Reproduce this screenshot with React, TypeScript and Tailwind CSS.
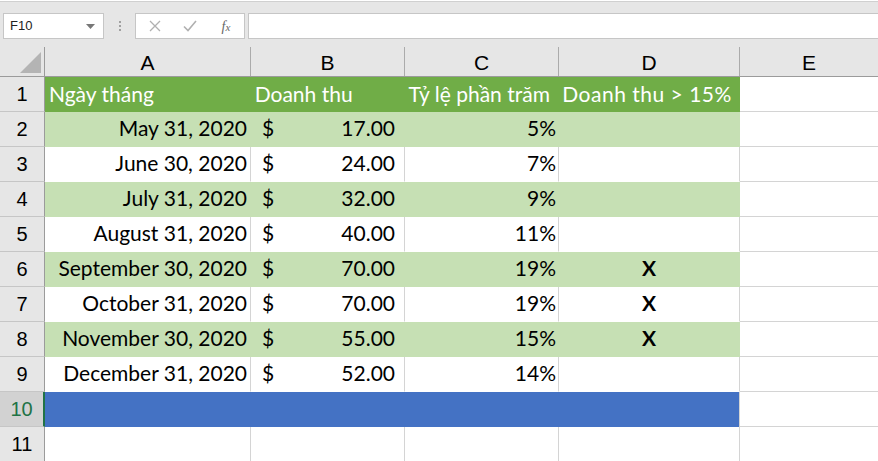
type Fill = "green" | "white";

const data: { n: number; date: string; amt: string; pct: string; x: boolean; fill: Fill }[] = [
  { n: 2, date: "May 31, 2020", amt: "17.00", pct: "5%", x: false, fill: "green" },
  { n: 3, date: "June 30, 2020", amt: "24.00", pct: "7%", x: false, fill: "white" },
  { n: 4, date: "July 31, 2020", amt: "32.00", pct: "9%", x: false, fill: "green" },
  { n: 5, date: "August 31, 2020", amt: "40.00", pct: "11%", x: false, fill: "white" },
  { n: 6, date: "September 30, 2020", amt: "70.00", pct: "19%", x: true, fill: "green" },
  { n: 7, date: "October 31, 2020", amt: "70.00", pct: "19%", x: true, fill: "white" },
  { n: 8, date: "November 30, 2020", amt: "55.00", pct: "15%", x: true, fill: "green" },
  { n: 9, date: "December 31, 2020", amt: "52.00", pct: "14%", x: false, fill: "white" },
];

const cols = [
  { l: "A", w: "w-[206px]" },
  { l: "B", w: "w-[154px]" },
  { l: "C", w: "w-[154px]" },
  { l: "D", w: "w-[181px]" },
];

function RowHead({ n, active }: { n: number; active?: boolean }) {
  return (
    <div
      className={`w-[45px] shrink-0 h-full flex items-center justify-center border-b border-b-[#c6c6c6] text-[20px] font-['Liberation_Sans',sans-serif] ${
        active
          ? "bg-[#d2d2d2] text-[#217346] border-r-2 border-r-[#217346]"
          : "bg-[#e6e6e6] text-black border-r border-r-[#9b9b9b]"
      }`}
    >
      {n}
    </div>
  );
}

function Cell({
  w,
  fill,
  className = "",
  children,
}: {
  w: string;
  fill: Fill;
  className?: string;
  children?: React.ReactNode;
}) {
  const f =
    fill === "green"
      ? "bg-[#c6e0b4] border-r-[#c6e0b4] border-b-[#c6e0b4]"
      : "bg-white border-r-[#d4d4d4] border-b-white";
  return (
    <div className={`${w} shrink-0 h-full flex items-end pb-[3px] border-r border-b ${f} ${className}`}>
      {children}
    </div>
  );
}

function ECell() {
  return <div className="flex-1 h-full bg-white border-b border-b-[#d4d4d4]" />;
}

export default function App() {
  return (
    <div className="w-[878px] h-[461px] overflow-hidden bg-white font-['Lato',sans-serif] text-black">
      {/* formula bar */}
      <div className="h-[46px] bg-[#e6e6e6] border-t border-t-[#d0d0d0] mt-px flex items-start pt-[11px] pl-[3px]">
        <div className="w-[101px] h-[26px] bg-white border border-[#c6c6c6] flex items-center justify-between pl-[6px] pr-[8px] text-[13px] font-['Liberation_Sans',sans-serif] text-[#222]">
          <span>F10</span>
          <svg width="9" height="5" viewBox="0 0 9 5">
            <path d="M0 0h9L4.5 5z" fill="#777" />
          </svg>
        </div>
        <div className="w-[31px] h-[26px] flex flex-col items-center justify-center gap-[2px]">
          <span className="w-[2px] h-[2px] bg-[#a0a0a0]" />
          <span className="w-[2px] h-[2px] bg-[#a0a0a0]" />
          <span className="w-[2px] h-[2px] bg-[#a0a0a0]" />
        </div>
        <div className="w-[110px] h-[26px] bg-white border border-[#c6c6c6] flex items-center text-[#b4b4b4]">
          <div className="w-[36px] flex justify-center pl-[2px]">
            <svg width="12" height="12" viewBox="0 0 12 12">
              <path d="M1 1l10 10M11 1L1 11" stroke="#b0b0b0" strokeWidth="1.3" />
            </svg>
          </div>
          <div className="w-[36px] flex justify-center">
            <svg width="14" height="12" viewBox="0 0 14 12">
              <path d="M1 6.5l4 4L13 1" stroke="#b0b0b0" strokeWidth="1.6" fill="none" />
            </svg>
          </div>
          <div className="flex-1 flex justify-center font-['Liberation_Serif',serif] italic text-[14px] text-[#666]">
            f<span className="text-[11px] mt-[3px]">x</span>
          </div>
        </div>
        <div className="flex-1 ml-[3px] h-[26px] bg-white border border-[#c6c6c6] border-r-0" />
      </div>

      {/* column headers */}
      <div className="h-[30px] flex bg-[#e6e6e6] border-b border-b-[#9b9b9b] font-['Liberation_Sans',sans-serif] text-[21px]">
        <div className="w-[45px] shrink-0 h-full flex items-end justify-end pr-[3px] pb-[3px] border-r border-r-[#9b9b9b]">
          <svg width="21" height="21" viewBox="0 0 21 21">
            <path d="M21 0V21H0z" fill="#b4b4b4" />
          </svg>
        </div>
        {cols.map((c) => (
          <div
            key={c.l}
            className={`${c.w} shrink-0 h-full flex items-center justify-center pt-[3px] border-r border-r-[#ababab]`}
          >
            {c.l}
          </div>
        ))}
        <div className="flex-1 h-full flex items-center justify-center pt-[3px]">E</div>
      </div>

      {/* row 1 */}
      <div className="h-[35px] flex text-[21px] text-white">
        <RowHead n={1} />
        <div className="w-[695px] shrink-0 h-full flex bg-[#70ad47] border-r border-r-[#70ad47] border-b border-b-[#70ad47]">
          <div className="w-[206px] h-full flex items-end pb-[2px] pl-[4px]">Ngày tháng</div>
          <div className="w-[154px] h-full flex items-end pb-[2px] pl-[4px]">Doanh thu</div>
          <div className="w-[154px] h-full flex items-end pb-[2px] pl-[4px] whitespace-nowrap">Tỷ lệ phần trăm</div>
          <div className="w-[181px] h-full flex items-end pb-[2px] pl-[4px] whitespace-nowrap tracking-[0.5px]">
            Doanh thu &gt; 15%
          </div>
        </div>
        <ECell />
      </div>

      {data.map((r) => (
        <div key={r.n} className="h-[35px] flex text-[21px]">
          <RowHead n={r.n} />
          <Cell w="w-[206px]" fill={r.fill} className="justify-end pr-[3px] whitespace-nowrap">
            {r.date}
          </Cell>
          <Cell w="w-[154px]" fill={r.fill} className="justify-between pl-[11px] pr-[9px]">
            <span>$</span>
            <span>{r.amt}</span>
          </Cell>
          <Cell w="w-[154px]" fill={r.fill} className="justify-end pr-[2px]">
            {r.pct}
          </Cell>
          <Cell w="w-[181px]" fill={r.fill} className="justify-center font-bold">
            {r.x ? "X" : ""}
          </Cell>
          <ECell />
        </div>
      ))}

      {/* row 10 */}
      <div className="h-[35px] flex">
        <RowHead n={10} active />
        <div className="w-[695px] shrink-0 h-full bg-[#4472c4] border-r border-r-[#d4d4d4]" />
        <ECell />
      </div>

      {/* row 11 */}
      <div className="h-[35px] flex text-[21px]">
        <RowHead n={11} />
        <div className="w-[206px] shrink-0 h-full border-r border-r-[#d4d4d4]" />
        <div className="w-[154px] shrink-0 h-full border-r border-r-[#d4d4d4]" />
        <div className="w-[154px] shrink-0 h-full border-r border-r-[#d4d4d4]" />
        <div className="w-[181px] shrink-0 h-full border-r border-r-[#d4d4d4]" />
        <div className="flex-1 h-full" />
      </div>
    </div>
  );
}
